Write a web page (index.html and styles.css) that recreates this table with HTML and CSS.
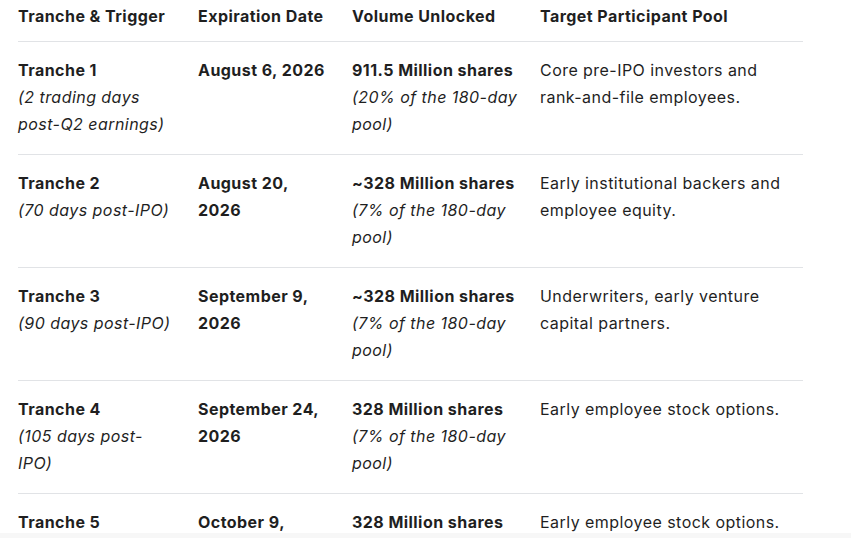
FILE: index.html
```html
<!DOCTYPE html>
<html>
<head>
<meta charset="utf-8">
<link rel="stylesheet" href="styles.css">
</head>
<body>
<div class="wrap">
<table class="tbl">
  <colgroup>
    <col class="c1"><col class="c2"><col class="c3"><col class="c4">
  </colgroup>
  <thead>
    <tr>
      <th>Tranche &amp; Trigger</th>
      <th>Expiration Date</th>
      <th>Volume Unlocked</th>
      <th>Target Participant Pool</th>
    </tr>
  </thead>
  <tbody>
    <tr>
      <td><b>Tranche 1</b><br><i>(2 trading days post-Q2 earnings)</i></td>
      <td><b>August 6, 2026</b></td>
      <td><b>911.5 Million shares</b><br><i>(20% of the 180-day pool)</i></td>
      <td>Core pre-IPO investors and rank-and-file employees.</td>
    </tr>
    <tr>
      <td><b>Tranche 2</b><br><i>(70 days post-IPO)</i></td>
      <td><b>August 20, 2026</b></td>
      <td><b>~328 Million shares</b><br><i>(7% of the 180-day pool)</i></td>
      <td>Early institutional backers and employee equity.</td>
    </tr>
    <tr>
      <td><b>Tranche 3</b><br><i>(90 days post-IPO)</i></td>
      <td><b>September 9, 2026</b></td>
      <td><b>~328 Million shares</b><br><i>(7% of the 180-day pool)</i></td>
      <td>Underwriters, early venture capital partners.</td>
    </tr>
    <tr>
      <td><b>Tranche 4</b><br><i>(105 days post-IPO)</i></td>
      <td><b>September 24, 2026</b></td>
      <td><b>328 Million shares</b><br><i>(7% of the 180-day pool)</i></td>
      <td>Early employee stock options.</td>
    </tr>
    <tr>
      <td><b>Tranche 5</b><br><i>(120 days post-IPO)</i></td>
      <td><b>October 9, 2026</b></td>
      <td><b>328 Million shares</b><br><i>(7% of the 180-day pool)</i></td>
      <td>Early employee stock options.</td>
    </tr>
  </tbody>
</table>
</div>
<div class="fade"></div>
</body>
</html>
```

FILE: styles.css
```css
html, body {
  margin: 0;
  padding: 0;
  background: #ffffff;
  overflow: hidden;
}
body {
  font-family: "Inter", "Noto Sans", sans-serif;
  font-size: 16px;
  letter-spacing: 0.45px;
  color: #1f1f1f;
}
.wrap {
  padding: 0 0 0 18px;
}
.tbl {
  border-collapse: collapse;
  table-layout: fixed;
  width: 785px;
}
.c1 { width: 180px; }
.c2 { width: 154px; }
.c3 { width: 188px; }
.c4 { width: 263px; }
.tbl th {
  text-align: left;
  font-weight: 700;
  line-height: 27px;
  padding: 3px 22px 11px 0;
  border-bottom: 1px solid #e1e3e6;
  vertical-align: top;
}
.tbl td {
  line-height: 27px;
  padding: 15px 22px 16px 0;
  border-bottom: 1px solid #e1e3e6;
  vertical-align: top;
}
.tbl td:nth-child(3) { padding-right: 14px; }
.tbl b { font-weight: 700; }
.tbl i { font-style: italic; }
.fade {
  position: fixed;
  left: 0;
  right: 10px;
  bottom: 0;
  height: 5px;
  background: #f7f7f7;
}
```
